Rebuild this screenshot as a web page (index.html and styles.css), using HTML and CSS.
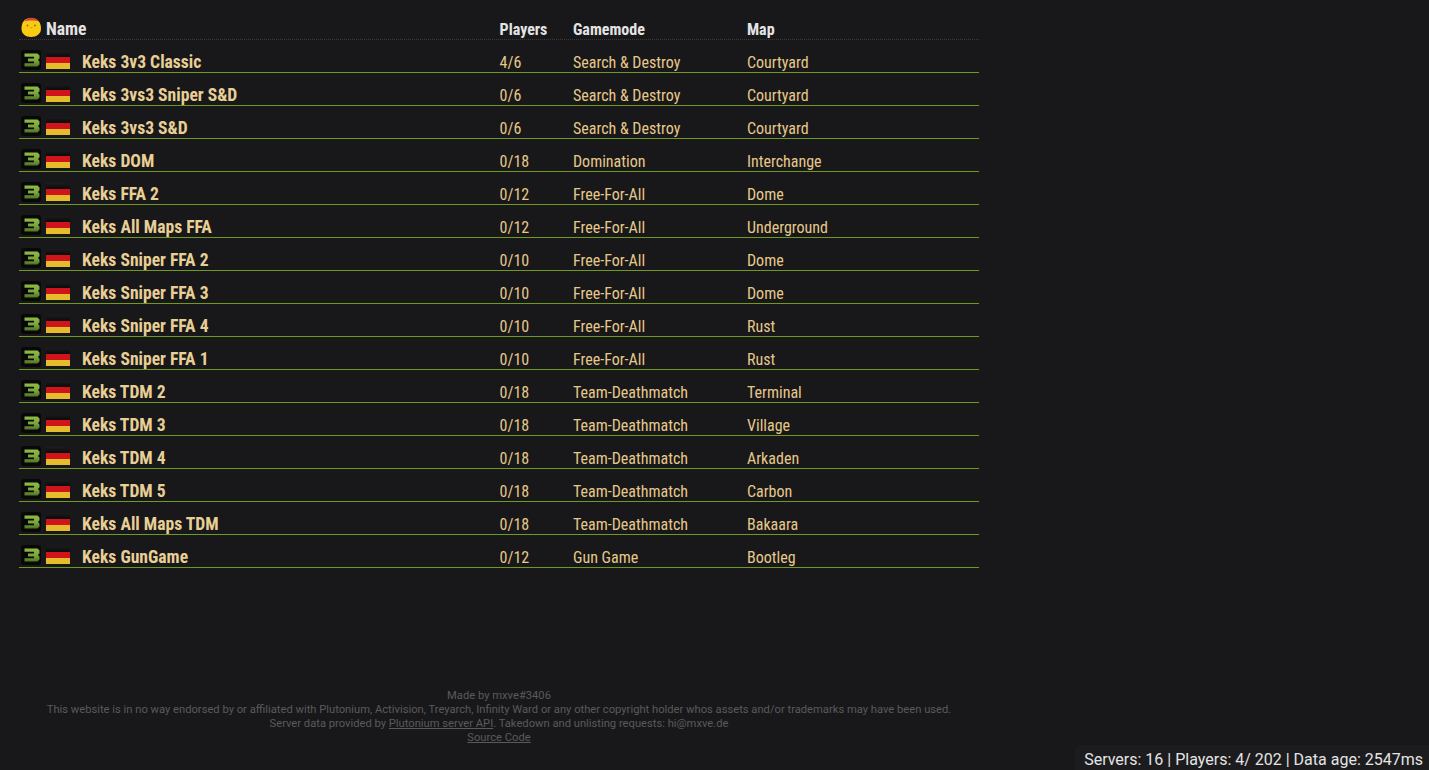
FILE: index.html
```html
<!DOCTYPE html>
<html lang="en">
<head><meta charset="utf-8"><title>Plutonium servers</title><link rel="stylesheet" href="styles.css"></head>
<body>
<svg class="defs" width="0" height="0" aria-hidden="true">
<defs>
<filter id="soft" x="-10%" y="-10%" width="120%" height="120%"><feGaussianBlur stdDeviation="0.75"/></filter>
<linearGradient id="g3" x1="0" y1="0" x2="0" y2="1"><stop offset="0" stop-color="#8fbb45"/><stop offset=".55" stop-color="#7ba53a"/><stop offset="1" stop-color="#4f7426"/></linearGradient>
<linearGradient id="flagtop" x1="0" y1="0" x2="0" y2="1"><stop offset="0" stop-color="#1c1c1c"/><stop offset="1" stop-color="#0a0a0a"/></linearGradient>
<symbol id="mw3" viewBox="0 0 20 20"><rect width="20" height="20" rx="3" fill="#070807"/><path d="M3.500 3.500H16.500L18.500 5.500V8.200L17 10L18.500 11.800V14.500L16.500 16.500H3.500V13.200H13V11.500H7V8.500H13V6.800H3.500Z" fill="url(#g3)" filter="url(#soft)"/></symbol>
<symbol id="flag" viewBox="0 0 24 18"><rect width="24" height="6" fill="url(#flagtop)"/><rect y="6" width="24" height="6" fill="#cf141c"/><rect y="12" width="24" height="6" fill="#e5bd2c"/></symbol>
</defs>
</svg>
<div class="page">
<main class="list">
<div class="row head">
<div class="c-name"><svg class="logo" viewBox="0 0 20 20"><path d="M0.500 11.500C0.500 5 4 1 10 1S20 5 20 11.500C20 17 15.500 20 10 20S0.500 17 0.500 11.500Z" fill="#fbcb12"/><path d="M3.500 4.600C6 -0.500 15 -0.500 17.500 4.600C13.500 3.200 7.500 3.200 3.500 4.600Z" fill="#d8453f"/><circle cx="6.500" cy="8.500" r=".9" fill="#8a6a10"/><circle cx="14" cy="8.500" r=".9" fill="#8a6a10"/><path d="M8.500 10H12L10.200 11.800Z" fill="#e6a018"/></svg><span class="name-label">Name</span></div>
<div class="c-players">Players</div><div class="c-mode">Gamemode</div><div class="c-map">Map</div>
</div>
<div class="row"><div class="c-name"><svg class="game"><use href="#mw3"/></svg><svg class="flag"><use href="#flag"/></svg><span class="title">Keks 3v3 Classic</span></div><div class="c-players">4/6</div><div class="c-mode">Search &amp; Destroy</div><div class="c-map">Courtyard</div></div>
<div class="row"><div class="c-name"><svg class="game"><use href="#mw3"/></svg><svg class="flag"><use href="#flag"/></svg><span class="title">Keks 3vs3 Sniper S&amp;D</span></div><div class="c-players">0/6</div><div class="c-mode">Search &amp; Destroy</div><div class="c-map">Courtyard</div></div>
<div class="row"><div class="c-name"><svg class="game"><use href="#mw3"/></svg><svg class="flag"><use href="#flag"/></svg><span class="title">Keks 3vs3 S&amp;D</span></div><div class="c-players">0/6</div><div class="c-mode">Search &amp; Destroy</div><div class="c-map">Courtyard</div></div>
<div class="row"><div class="c-name"><svg class="game"><use href="#mw3"/></svg><svg class="flag"><use href="#flag"/></svg><span class="title">Keks DOM</span></div><div class="c-players">0/18</div><div class="c-mode">Domination</div><div class="c-map">Interchange</div></div>
<div class="row"><div class="c-name"><svg class="game"><use href="#mw3"/></svg><svg class="flag"><use href="#flag"/></svg><span class="title">Keks FFA 2</span></div><div class="c-players">0/12</div><div class="c-mode">Free-For-All</div><div class="c-map">Dome</div></div>
<div class="row"><div class="c-name"><svg class="game"><use href="#mw3"/></svg><svg class="flag"><use href="#flag"/></svg><span class="title">Keks All Maps FFA</span></div><div class="c-players">0/12</div><div class="c-mode">Free-For-All</div><div class="c-map">Underground</div></div>
<div class="row"><div class="c-name"><svg class="game"><use href="#mw3"/></svg><svg class="flag"><use href="#flag"/></svg><span class="title">Keks Sniper FFA 2</span></div><div class="c-players">0/10</div><div class="c-mode">Free-For-All</div><div class="c-map">Dome</div></div>
<div class="row"><div class="c-name"><svg class="game"><use href="#mw3"/></svg><svg class="flag"><use href="#flag"/></svg><span class="title">Keks Sniper FFA 3</span></div><div class="c-players">0/10</div><div class="c-mode">Free-For-All</div><div class="c-map">Dome</div></div>
<div class="row"><div class="c-name"><svg class="game"><use href="#mw3"/></svg><svg class="flag"><use href="#flag"/></svg><span class="title">Keks Sniper FFA 4</span></div><div class="c-players">0/10</div><div class="c-mode">Free-For-All</div><div class="c-map">Rust</div></div>
<div class="row"><div class="c-name"><svg class="game"><use href="#mw3"/></svg><svg class="flag"><use href="#flag"/></svg><span class="title">Keks Sniper FFA 1</span></div><div class="c-players">0/10</div><div class="c-mode">Free-For-All</div><div class="c-map">Rust</div></div>
<div class="row"><div class="c-name"><svg class="game"><use href="#mw3"/></svg><svg class="flag"><use href="#flag"/></svg><span class="title">Keks TDM 2</span></div><div class="c-players">0/18</div><div class="c-mode">Team-Deathmatch</div><div class="c-map">Terminal</div></div>
<div class="row"><div class="c-name"><svg class="game"><use href="#mw3"/></svg><svg class="flag"><use href="#flag"/></svg><span class="title">Keks TDM 3</span></div><div class="c-players">0/18</div><div class="c-mode">Team-Deathmatch</div><div class="c-map">Village</div></div>
<div class="row"><div class="c-name"><svg class="game"><use href="#mw3"/></svg><svg class="flag"><use href="#flag"/></svg><span class="title">Keks TDM 4</span></div><div class="c-players">0/18</div><div class="c-mode">Team-Deathmatch</div><div class="c-map">Arkaden</div></div>
<div class="row"><div class="c-name"><svg class="game"><use href="#mw3"/></svg><svg class="flag"><use href="#flag"/></svg><span class="title">Keks TDM 5</span></div><div class="c-players">0/18</div><div class="c-mode">Team-Deathmatch</div><div class="c-map">Carbon</div></div>
<div class="row"><div class="c-name"><svg class="game"><use href="#mw3"/></svg><svg class="flag"><use href="#flag"/></svg><span class="title">Keks All Maps TDM</span></div><div class="c-players">0/18</div><div class="c-mode">Team-Deathmatch</div><div class="c-map">Bakaara</div></div>
<div class="row"><div class="c-name"><svg class="game"><use href="#mw3"/></svg><svg class="flag"><use href="#flag"/></svg><span class="title">Keks GunGame</span></div><div class="c-players">0/12</div><div class="c-mode">Gun Game</div><div class="c-map">Bootleg</div></div>
</main>
<footer class="foot">
<div>Made by mxve#3406</div>
<div>This website is in no way endorsed by or affiliated with Plutonium, Activision, Treyarch, Infinity Ward or any other copyright holder whos assets and/or trademarks may have been used.</div>
<div>Server data provided by <a href="#">Plutonium server API</a>. Takedown and unlisting requests: hi@mxve.de</div>
<div><a href="#">Source Code</a></div>
</footer>
</div>
<aside class="status">Servers: 16 | Players: 4/ 202 | Data age: 2547ms</aside>
</body>
</html>
```
FILE: styles.css
```css
html,body{margin:0;height:100%}
body{background:#18181a;color:#e6c88a;font-family:Roboto,sans-serif;overflow:hidden}
.defs{position:absolute}
.page{width:960px;padding:14px 19px 0}
.list{font-stretch:75%;font-size:16px}
.row{display:flex;align-items:flex-end;height:32px;border-bottom:1px solid #6f9a1e;line-height:18px}
.head{height:25px;border-bottom:1px dotted #3a3a3a;color:#e4e4e4;font-weight:700}
.c-name{display:flex;align-items:center;width:478.6px;padding-left:2px;height:22px}
.c-players{width:73.4px}
.c-mode{width:174px}
.c-map{flex:1}
.name-label{font-size:17.6px;margin-left:5px;margin-top:2px}
.logo{width:20px;height:20px;flex:none;margin-bottom:2px}
.game{width:20px;height:20px;flex:none;margin-bottom:2px}
.flag{width:24px;height:18px;flex:none;margin:0 12px 2px 5px}
.title{font-size:17.6px;font-weight:700;margin-top:2px;color:#e8cf96}
.foot{margin-top:121px;text-align:center;color:#5a5a5a;font-size:11.2px;line-height:14px}
.foot a{color:inherit}
.status{position:fixed;right:0;bottom:0;padding:5px 6px 0 9px;background:#1c1c1e;border-top-left-radius:5px;color:#e4e4e4;font-size:16px;line-height:20px}
```
